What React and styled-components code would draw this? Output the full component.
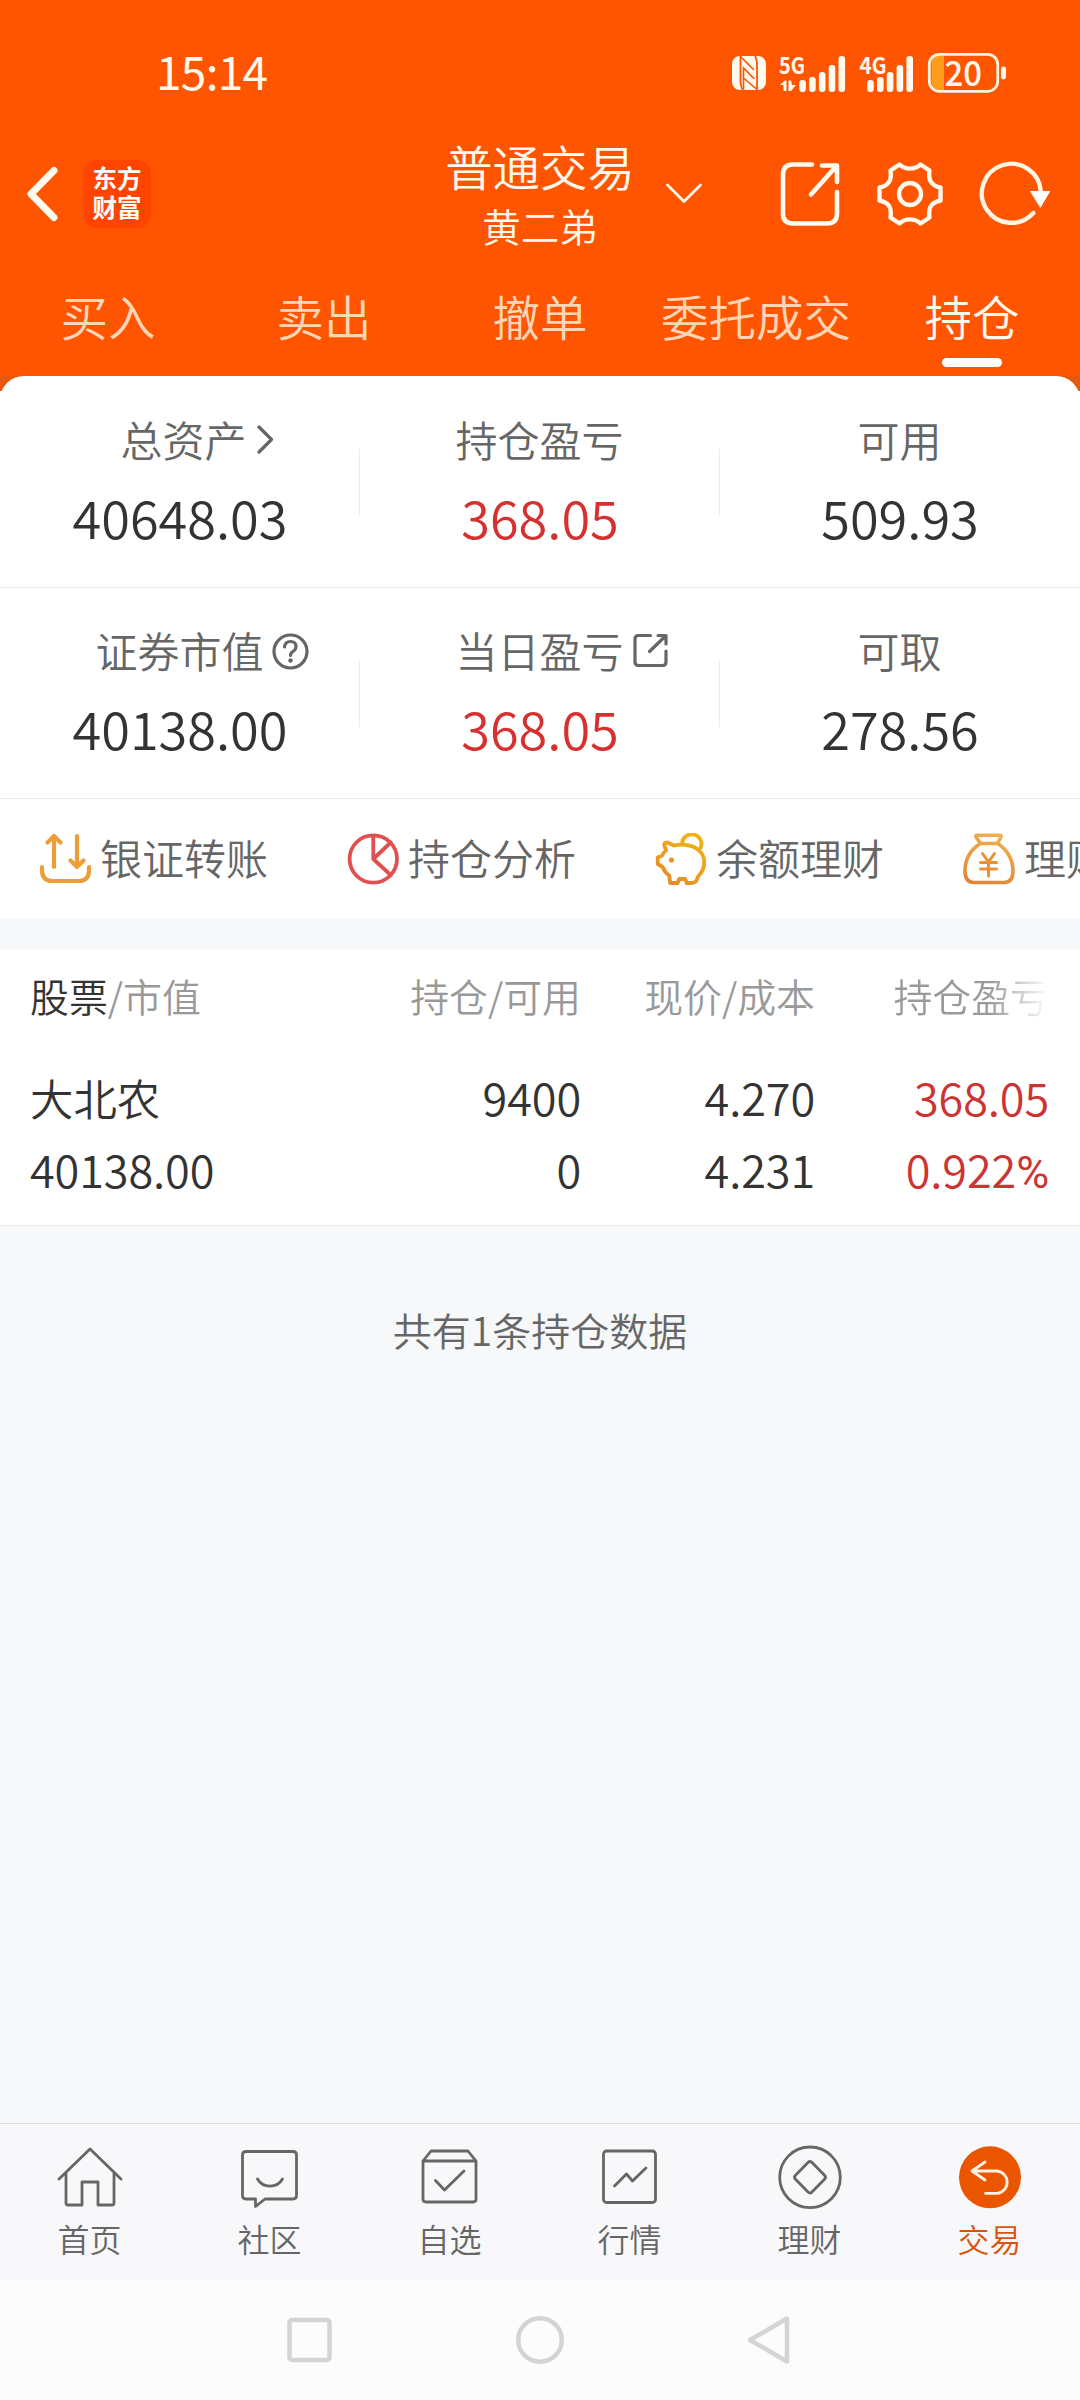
import React from "react";
import styled, { createGlobalStyle } from "styled-components";

const GlobalStyle = createGlobalStyle`
  * { box-sizing: border-box; }
  body { margin: 0; background: #f7f8fa; }
`;

const Screen = styled.div`
  width: 1080px;
  height: 2400px;
  display: flex;
  flex-direction: column;
  overflow: hidden;
  background: #f7f8fa;
  color: #333;
  font-family: "Noto Sans CJK SC", "Noto Sans", sans-serif;
  font-weight: 350;
  white-space: nowrap;
`;

/* ---------- header ---------- */

const Header = styled.header`
  height: 376px;
  flex: none;
  background: #ff5500;
  color: #fff9ee;
`;

const StatusBar = styled.div`
  height: 134px;
  padding: 12px 73px 0 156px;
  display: flex;
  align-items: center;
`;

const Clock = styled.span`
  flex: 1;
  font-size: 46px;
  font-weight: 400;
  line-height: 60px;
  margin-top: -6px;
  letter-spacing: -0.7px;
`;

const TitleBar = styled.div`
  height: 120px;
  display: grid;
  grid-template-columns: 1fr auto 1fr;
  align-items: center;
`;

const TitleLeft = styled.div`
  display: flex;
  align-items: center;
  padding-left: 26px;
`;

const Logo = styled.div`
  width: 68px;
  height: 68px;
  margin-left: 24px;
  padding: 3px 0 0;
  border-radius: 14px;
  background: #ff4400;
  color: #fff;
  text-align: center;
  font-size: 24.5px;
  font-weight: 700;
  line-height: 29px;
`;

const TitleText = styled.div`
  width: 188px;
  text-align: center;
`;

const Title = styled.div`
  margin: 0 -2px;
  padding-top: 2px;
  font-size: 47.4px;
  line-height: 60px;
`;

const Subtitle = styled.div`
  font-size: 38.5px;
  line-height: 58px;
`;

const TitleActions = styled.div`
  display: flex;
  align-items: center;
  padding-left: 30px;
`;

const Spaced = styled.div`
  display: flex;
  margin-left: ${(p) => p.$left}px;
`;

const Tabs = styled.nav`
  height: 122px;
  padding-top: 32px;
  display: grid;
  grid-template-columns: repeat(5, 216px);
`;

const Tab = styled.div`
  display: flex;
  flex-direction: column;
  align-items: center;
  font-size: 47.5px;
  line-height: 60px;
  color: ${(p) => (p.$active ? "#fff9ee" : "#ffd5b8")};
  &::after {
    content: "";
    width: 60px;
    height: 9px;
    margin-top: 12px;
    border-radius: 5px;
    background: ${(p) => (p.$active ? "#fff" : "transparent")};
  }
`;

/* ---------- account summary ---------- */

const SummaryBack = styled.section`
  flex: none;
  background: linear-gradient(#e5590c 15px, #fff 15px);
`;

const Summary = styled.div`
  background: #fff;
  border-radius: 24px 24px 0 0;
`;

const StatRow = styled.div`
  height: ${(p) => p.$height}px;
  border-bottom: 1px solid #ebebeb;
  display: grid;
  grid-template-columns: repeat(3, 360px);
`;

const Stat = styled.div`
  padding-top: ${(p) => p.$top}px;
  text-align: center;
  background: ${(p) =>
    p.$divider ? "linear-gradient(#ebebeb, #ebebeb) right 0 top 73px / 1px 66px no-repeat" : "none"};
`;

const StatLabel = styled.div`
  display: grid;
  grid-template-columns: 1fr auto 1fr;
  align-items: center;
  height: 50px;
  padding-left: ${(p) => p.$indent || 0}px;
  padding-right: 1px;
  line-height: 50px;
  font-size: 42px;
  color: #666;
  svg { grid-column: 3; justify-self: start; }
`;

const StatName = styled.span`
  grid-column: 2;
`;

const StatValue = styled.div`
  margin-top: 22px;
  font-size: 52.3px;
  line-height: 60px;
  font-weight: 360;
  color: ${(p) => (p.$up ? "#d63031" : "#333")};
`;

const Shortcuts = styled.div`
  height: 120px;
  padding-left: 39px;
  display: flex;
  align-items: center;
  gap: 79px;
  overflow: hidden;
`;

const Shortcut = styled.div`
  flex: none;
  display: flex;
  align-items: center;
  gap: 9px;
  font-size: 42px;
  line-height: 50px;
  color: #666;
  span { margin-top: -4px; }
`;

/* ---------- holdings ---------- */

const Holdings = styled.section`
  flex: none;
  height: 277px;
  margin-top: 30px;
  padding: 0 31px 0 30px;
  background: #fff;
  border-bottom: 1px solid #ebebeb;
`;

const HoldingGrid = styled.div`
  display: grid;
  grid-template-columns: 251px 300px 234px 234px;
  text-align: right;
  & > :first-child { text-align: left; }
`;

const HeadRow = styled(HoldingGrid)`
  height: 96px;
  padding-top: 22px;
  font-size: 38.9px;
  line-height: 48px;
  color: #999;
`;

const Strong = styled.span`
  color: #333;
`;

const FadedHead = styled.div`
  background: linear-gradient(90deg, #999 74%, #fff 100%);
  background-clip: text;
  color: transparent;
`;

const BodyRow = styled(HoldingGrid)`
  height: 72px;
  padding-top: ${(p) => p.$top || 0}px;
  font-size: 45px;
  line-height: 72px;
  letter-spacing: -0.1px;
`;

const StockName = styled.div`
  font-size: 43.4px;
  letter-spacing: 0;
`;

const Gain = styled.div`
  color: #cc3333;
`;

const Percent = styled.span`
  font-family: Roboto, sans-serif;
  font-weight: 400;
`;

const Footnote = styled.p`
  flex: 1;
  margin: 0;
  padding-top: 78px;
  text-align: center;
  font-size: 39px;
  line-height: 50px;
  color: #666;
`;

/* ---------- bottom ---------- */

const BottomNav = styled.nav`
  flex: none;
  height: 157px;
  border-top: 1px solid #dedede;
  background: #f8f8fa;
  display: grid;
  grid-template-columns: repeat(6, 180px);
`;

const NavItem = styled.div`
  padding: 20px 1px 0 0;
  display: flex;
  flex-direction: column;
  align-items: center;
  gap: 8px;
  font-size: 32px;
  line-height: 40px;
  color: ${(p) => (p.$active ? "#d9540f" : "#666")};
`;

const SystemNav = styled.div`
  flex: none;
  height: 120px;
  background: #fcfcfc;
  display: flex;
  justify-content: center;
  align-items: center;
  gap: 180px;
`;

const Icon = ({ w, h, sw = 4, color = "currentColor", children }) => (
  <svg width={w} height={h} viewBox={`0 0 ${w} ${h}`} fill="none" stroke={color} strokeWidth={sw}
    strokeLinecap="round" strokeLinejoin="round">
    {children}
  </svg>
);

const SignalText = styled.text`
  font-family: "Noto Sans CJK SC", sans-serif;
  font-weight: ${(p) => p.$weight || 700};
  font-size: ${(p) => p.$size}px;
`;

const heights = [12, 15, 20, 27, 36];

const StatusIcons = () => (
  <svg width="276" height="64" viewBox="0 -10 276 64" fill="#fff9ee">
    <rect x="1" y="5" width="34" height="34" rx="8" />
    <path d="M9.500 5 V29 Q9.500 36 12 39 M26 39 V15 Q26 8 24 5" stroke="#ff5500" strokeWidth="1.8" fill="none" />
    <path d="M9.500 5.500 L23 19 M12.500 38.500 V17 L23.500 28 M12.500 27 L26 38.500" stroke="#ff5500" strokeWidth="1.6" fill="none" />
    <SignalText x="48" y="23" $size="23" textLength="26" lengthAdjust="spacingAndGlyphs">5G</SignalText>
    <path d="M49 34 L54 29.500 H55.500 V40 H52.500 V34 Z M57.500 29.500 H60 L61 34 H65 L60 40 H57.500 Z" />
    {heights.map((n, i) => (
      <rect key={i} x={68.3 + i * 9.8} y={41 - n} width="6.6" height={n} rx="3" />
    ))}
    <SignalText x="128.500" y="23" $size="23" textLength="27" lengthAdjust="spacingAndGlyphs">4G</SignalText>
    {heights.map((n, i) => (
      <rect key={i} x={136.2 + i * 9.8} y={41 - n} width="6.6" height={n} rx="3" />
    ))}
    <path d="M207 4.500 H213 V39 H207 Q200.500 39 200.500 30 V13 Q200.500 4.500 207 4.500 Z" fill="#ff9c1a" />
    <rect x="198.300" y="3.300" width="68.400" height="37" rx="10" fill="none" stroke="#fff3df" strokeWidth="2.8" />
    <rect x="270" y="15.500" width="5" height="13" rx="2.400" />
    <SignalText x="213.500" y="34.500" $size="34.500" $weight="500" textLength="37.500" lengthAdjust="spacingAndGlyphs">20</SignalText>
  </svg>
);

const ShareIcon = () => (
  <Icon w={60} h={66} sw={4.6}>
    <path d="M32 3.500 H13 Q3 3.500 3 13.500 V52.500 Q3 62.500 13 62.500 H47 Q57 62.500 57 52.500 V31" />
    <path d="M42 4.500 H57 V21 M56 5.500 L31 33.500" />
  </Icon>
);

const GearIcon = () => (
  <Icon w={66} h={66} sw={4.4}>
    <g transform="translate(33 33)">
      <path d="M-10.500 -29.500 C-5 -24 5 -24 10.500 -29.500 L19.500 -23.500 C18 -14 21 -8.500 30.500 -6.500 V6.500 C21 8.500 18 14 19.500 23.500 L10.500 29.500 C5 24 -5 24 -10.500 29.500 L-19.500 23.500 C-18 14 -21 8.500 -30.500 6.500 V-6.500 C-21 -8.500 -18 -14 -19.500 -23.500 Z" />
      <circle r="11" />
    </g>
  </Icon>
);

const RefreshIcon = () => (
  <Icon w={74} h={66} sw={4.4} color="#fff3e2">
    <path d="M54.300 52 A29.500 29.500 0 1 1 61.800 30.500" />
    <path d="M52 30.500 H70.500 L61.500 46 Z" fill="#fff" stroke="#fff" strokeWidth="1" />
  </Icon>
);

const TransferIcon = () => (
  <Icon w={52} h={52} sw={4.2} color="#ec9f38">
    <path d="M15 34 V3 M8.500 9.500 L15 3 L21.500 9.500 M38 3 V34 M31.500 27.500 L38 34 L44.500 27.500" />
    <path d="M3 34 V37 Q3 48 13.500 48 H39.500 Q50 48 50 37 V34" />
  </Icon>
);

const PieIcon = () => (
  <Icon w={52} h={52} sw={3.8} color="#e05050">
    <circle cx="26.300" cy="26" r="23.700" />
    <path d="M26.300 3 V26 L43.700 9.500 M26.300 26 L43.700 42" />
  </Icon>
);

const PiggyIcon = () => (
  <Icon w={52} h={52} sw={3.8} color="url(#pig)">
    <defs>
      <linearGradient id="pig" gradientUnits="userSpaceOnUse" x1="40" y1="0" x2="10" y2="50">
        <stop stopColor="#f0b518" /><stop offset="1" stopColor="#e38d27" />
      </linearGradient>
    </defs>
    <g transform="translate(0.700 0)">
      <path d="M10.500 17.500 L8.500 12 Q8.500 9.500 12 9.500 L18 12.500 Q24 11 30 12 C41 13 48 20 48.500 28 C49 35 46 40 42 44 Q41 50 36 50 H31 L29.500 46 H23.500 L22 50 H14.500 L13.500 42.500 Q9 39.500 7 34 L2 31 V24.500 L6.500 22.500 Q7.500 19.500 10.500 17.500 Z" />
      <path d="M26.500 11 A9.600 9.600 0 1 1 44.500 15.500" />
      <circle cx="15.800" cy="27" r="2.600" fill="#e69722" stroke="none" />
    </g>
  </Icon>
);

const BagIcon = () => (
  <Icon w={52} h={52} sw={3.6} color="url(#bag)">
    <defs>
      <linearGradient id="bag" gradientUnits="userSpaceOnUse" x1="30" y1="0" x2="15" y2="52">
        <stop stopColor="#f2ae4e" /><stop offset="1" stopColor="#e08536" />
      </linearGradient>
    </defs>
    <path d="M14 2.300 H37 Q38.500 2.300 38 4 L34.500 10.500 H17.500 L13 4 Q12.500 2.300 14 2.300 Z" />
    <path d="M17.500 10.500 C7 17 2 27 2 38 Q2 49.500 11 49.500 H41 Q50 49.500 50 38 C50 27 44 16 34.500 10.500" />
    <path d="M19.500 20.500 L25.500 29 L31.500 20.500 M25.500 29 V43 M17.500 29.500 H33.500 M17.500 36 H33.500" stroke="#ee9030" strokeWidth="3" />
  </Icon>
);

const navIcons = {
  home: (
    <path d="M2 35 L33 5 L64 35 M9 29 V59 Q9 61 11 61 H25 V38 H41 V61 H55 Q57 61 57 59 V29" />
  ),
  chat: (
    <>
      <path d="M9 7.500 H56 Q59.500 7.500 59.500 11 V51.500 Q59.500 55 56 55 H28 L18.500 62.500 V55 H9 Q5.500 55 5.500 51.500 V11 Q5.500 7.500 9 7.500 Z" />
      <path d="M20.500 35 C26 44.500 40 44.500 45.500 35" />
    </>
  ),
  select: (
    <path d="M6 17 L14 7 H51 L59 17 V55 Q59 58 56 58 H9 Q6 58 6 55 Z M6 17 H59 M18.500 36.500 L27.500 46 L47 27" />
  ),
  market: (
    <>
      <rect x="6.500" y="7" width="52" height="51.500" rx="3" />
      <path d="M17.500 42 L29.500 30 L35.500 37 L49 24" />
    </>
  ),
  wealth: (
    <>
      <circle cx="33" cy="33.300" r="30.300" />
      <path d="M31 18.500 Q33 16.500 35 18.500 L47.500 31.300 Q49.500 33.300 47.500 35.300 L35 48 Q33 50 31 48 L18.500 35.300 Q16.500 33.300 18.500 31.300 Z" />
    </>
  ),
  trade: (
    <>
      <circle cx="33" cy="33.300" r="31" fill="#eb5500" stroke="none" />
      <path d="M28 18 L15 27 L28 36 M15 27 H40 A11.200 11.200 0 0 1 40 49.300 H28.500" stroke="#fff1e4" />
    </>
  ),
};

const tabs = ["买入", "卖出", "撤单", "委托成交", "持仓"];

const stats = [
  [
    {
      label: "总资产",
      value: "40648.03",
      indent: 8,
      icon: <Icon w={30} h={30} sw={3.2} color="#666"><path d="M12 3 L24.500 15.500 L12 28" /></Icon>,
    },
    { label: "持仓盈亏", value: "368.05", up: true },
    { label: "可用", value: "509.93" },
  ],
  [
    {
      label: "证券市值",
      value: "40138.00",
      icon: (
        <Icon w={46} h={40} sw={3.2} color="#666">
          <circle cx="26.500" cy="21.500" r="16.500" />
          <path d="M20.500 17 Q21 11.500 26.500 11.500 Q32 11.500 32 16.500 Q32 19.500 29 21.500 Q26.500 23 26.500 25.500" />
          <circle cx="26.500" cy="30.500" r="2.200" fill="#666" stroke="none" />
        </Icon>
      ),
    },
    {
      label: "当日盈亏",
      value: "368.05",
      up: true,
      icon: (
        <Icon w={46} h={38} sw={3.2} color="#666">
          <path d="M26.500 4.500 H14.500 Q11 4.500 11 8 V31 Q11 34.500 14.500 34.500 H38.500 Q42 34.500 42 31 V20 M34 4.500 H42 V13 M41.500 5 L25.500 20.500" />
        </Icon>
      ),
    },
    { label: "可取", value: "278.56" },
  ],
];

const shortcuts = [
  ["银证转账", TransferIcon],
  ["持仓分析", PieIcon],
  ["余额理财", PiggyIcon],
  ["理财", BagIcon],
];

const navItems = [
  ["首页", "home"],
  ["社区", "chat"],
  ["自选", "select"],
  ["行情", "market"],
  ["理财", "wealth"],
  ["交易", "trade"],
];

export default function App() {
  return (
    <Screen>
      <GlobalStyle />
      <Header>
        <StatusBar>
          <Clock>15:14</Clock>
          <StatusIcons />
        </StatusBar>
        <TitleBar>
          <TitleLeft>
            <Icon w={33} h={58} sw={7}><path d="M28 5.500 L5 29 L28 52.500" /></Icon>
            <Logo>东方<br />财富</Logo>
          </TitleLeft>
          <TitleText>
            <Title>普通交易</Title>
            <Subtitle>黄二弟</Subtitle>
          </TitleText>
          <TitleActions>
            <Icon w={40} h={24} sw={2.8}><path d="M3.500 3 L20 19.500 L36.500 3" /></Icon>
            <Spaced $left={76}><ShareIcon /></Spaced>
            <Spaced $left={37}><GearIcon /></Spaced>
            <Spaced $left={36}><RefreshIcon /></Spaced>
          </TitleActions>
        </TitleBar>
        <Tabs>
          {tabs.map((t, i) => <Tab key={t} $active={i === 4}>{t}</Tab>)}
        </Tabs>
      </Header>

      <SummaryBack>
        <Summary>
          {stats.map((row, r) => (
            <StatRow key={r} $height={r === 0 ? 212 : 211}>
              {row.map((s, i) => (
                <Stat key={s.label} $top={r === 0 ? 38 : 37} $divider={i < 2}>
                  <StatLabel $indent={s.indent}>
                    <StatName>{s.label}</StatName>
                    {s.icon}
                  </StatLabel>
                  <StatValue $up={s.up}>{s.value}</StatValue>
                </Stat>
              ))}
            </StatRow>
          ))}
          <Shortcuts>
            {shortcuts.map(([label, Glyph]) => (
              <Shortcut key={label}><Glyph /><span>{label}</span></Shortcut>
            ))}
          </Shortcuts>
        </Summary>
      </SummaryBack>

      <Holdings>
        <HeadRow>
          <div><Strong>股票</Strong>/市值</div>
          <div>持仓/可用</div>
          <div>现价/成本</div>
          <FadedHead>持仓盈亏</FadedHead>
        </HeadRow>
        <BodyRow $top={16}>
          <StockName>大北农</StockName>
          <div>9400</div>
          <div>4.270</div>
          <Gain>368.05</Gain>
        </BodyRow>
        <BodyRow $top={16}>
          <div>40138.00</div>
          <div>0</div>
          <div>4.231</div>
          <Gain>0.922<Percent>%</Percent></Gain>
        </BodyRow>
      </Holdings>

      <Footnote>共有1条持仓数据</Footnote>

      <BottomNav>
        {navItems.map(([label, icon]) => (
          <NavItem key={icon} $active={icon === "trade"}>
            <Icon w={66} h={66} sw={2.8}>{navIcons[icon]}</Icon>
            {label}
          </NavItem>
        ))}
      </BottomNav>
      <SystemNav>
        <Icon w={50} h={50} sw={4.5} color="#d4d4d4"><rect x="4.500" y="5" width="40" height="40" rx="2.500" /></Icon>
        <Icon w={50} h={50} sw={4.5} color="#d4d4d4"><circle cx="25" cy="25" r="21.800" /></Icon>
        <Icon w={50} h={50} sw={4.5} color="#d4d4d4"><path d="M42 3.500 L5 25 L42 46.500 Z" /></Icon>
      </SystemNav>
    </Screen>
  );
}
